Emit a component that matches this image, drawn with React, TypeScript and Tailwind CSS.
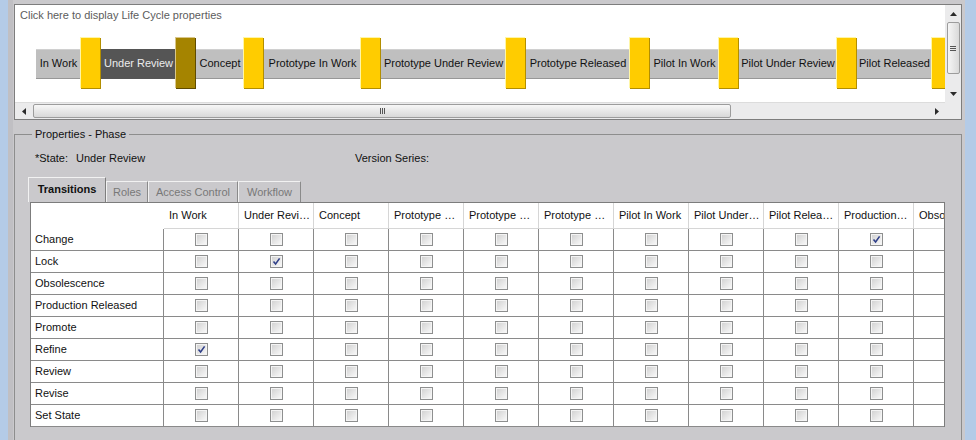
import React from 'react';

const phases = [
  { name: 'In Work', w: 'w-[45px]' },
  { name: 'Under Review', w: 'w-[75px]', current: true },
  { name: 'Concept', w: 'w-[48px]' },
  { name: 'Prototype In Work', w: 'w-[97px]' },
  { name: 'Prototype Under Review', w: 'w-[125px]' },
  { name: 'Prototype Released', w: 'w-[104px]' },
  { name: 'Pilot In Work', w: 'w-[69px]' },
  { name: 'Pilot Under Review', w: 'w-[98px]' },
  { name: 'Pilot Released', w: 'w-[75px]' },
];

const columns = [
  'In Work',
  'Under Revi…',
  'Concept',
  'Prototype …',
  'Prototype …',
  'Prototype …',
  'Pilot In Work',
  'Pilot Under…',
  'Pilot Relea…',
  'Production…',
  'Obso',
];

// row label -> checked column index
const rows: { name: string; checked?: number }[] = [
  { name: 'Change', checked: 9 },
  { name: 'Lock', checked: 1 },
  { name: 'Obsolescence' },
  { name: 'Production Released' },
  { name: 'Promote' },
  { name: 'Refine', checked: 0 },
  { name: 'Review' },
  { name: 'Revise' },
  { name: 'Set State' },
];

function Checkbox({ on }: { on?: boolean }) {
  return (
    <span className="flex h-[13px] w-[13px] border border-[#8e8f8f] bg-[#f4f4f4] p-px">
      <span className="flex h-full w-full items-center justify-center bg-gradient-to-br from-[#d3d3d3] to-[#f7f7f7]">
        {on && (
          <svg width="9" height="9" viewBox="0 0 9 9">
            <path d="M1.5 4.5 L3.6 7 L7.6 1.4" fill="none" stroke="#2f3f88" strokeWidth="1.6" />
          </svg>
        )}
      </span>
    </span>
  );
}

function Arrow({ dir }: { dir: 'up' | 'down' | 'left' | 'right' }) {
  const pts = {
    up: '0,4 3.5,0 7,4',
    down: '0,0 3.5,4 7,0',
    left: '4,0 0,3.5 4,7',
    right: '0,0 4,3.5 0,7',
  }[dir];
  const vertical = dir === 'up' || dir === 'down';
  return (
    <svg width={vertical ? 7 : 4} height={vertical ? 4 : 7} viewBox={vertical ? '0 0 7 4' : '0 0 4 7'}>
      <polygon points={pts} fill="#2b2b2b" />
    </svg>
  );
}

function Marker({ current }: { current?: boolean }) {
  return (
    <div
      className={
        current
          ? 'h-[51px] w-[20px] shrink-0 border-r border-b border-[#5f4b00] bg-[#a58400] shadow-[-1px_-1px_0_#d9c68a]'
          : 'h-[51px] w-[20px] shrink-0 border-r border-b border-[#b28e00] bg-[#ffcc00] shadow-[-1px_-1px_0_#fff6a6]'
      }
    />
  );
}

export default function App() {
  return (
    <div className="flex h-[440px] w-[976px] overflow-hidden bg-[#cac9cc] font-['Liberation_Sans',Arial,sans-serif] text-[11px] leading-[13px] text-[#111]">
      <div className="w-[8px] shrink-0 bg-[#b4cbe7]" />
      <div className="w-[5px] shrink-0 bg-[#c0bfc3]" />

      <main className="flex min-w-0 flex-1 flex-col pl-[1px] pr-[3px] pt-[4px]">
        {/* life cycle diagram */}
        <div className="grid h-[116px] shrink-0 grid-cols-[1fr_16px] grid-rows-[1fr_17px] border border-[#7d7d7d] bg-white">
          <div className="min-w-0 overflow-hidden">
            <div className="pl-[5px] pt-[4px] text-[#5c5c5c]">Click here to display Life Cycle properties</div>
            <div className="mt-[16px] flex w-max items-center pl-[21px]">
              {phases.map((p) => (
                <React.Fragment key={p.name}>
                  <div
                    className={
                      p.current
                        ? `flex h-[30px] shrink-0 items-center justify-center whitespace-nowrap bg-[#555555] text-[#ececec] ${p.w}`
                        : `flex h-[30px] shrink-0 items-center justify-center whitespace-nowrap border-t border-b border-t-[#d0d0d0] border-b-[#979797] bg-[#bfbfbf] ${p.w}`
                    }
                  >
                    {p.name}
                  </div>
                  <Marker current={p.current} />
                </React.Fragment>
              ))}
            </div>
          </div>

          <div className="flex flex-col items-center bg-[#ebebec]">
            <div className="flex h-[17px] items-center justify-center">
              <Arrow dir="up" />
            </div>
            <div className="flex h-[52px] w-[13px] items-center justify-center rounded-[2px] border border-[#9c9c9c] bg-gradient-to-r from-[#f6f6f6] to-[#d9d9d9]">
              <div className="flex flex-col gap-px">
                <span className="h-px w-[6px] bg-[#555]" />
                <span className="h-px w-[6px] bg-[#555]" />
                <span className="h-px w-[6px] bg-[#555]" />
              </div>
            </div>
            <div className="flex-1" />
            <div className="flex h-[17px] items-center justify-center">
              <Arrow dir="down" />
            </div>
          </div>

          <div className="flex min-w-0 items-center border-t border-[#dcdcdc] bg-[#ebebec]">
            <div className="flex w-[17px] shrink-0 items-center justify-center">
              <Arrow dir="left" />
            </div>
            <div className="ml-px flex h-[14px] w-[698px] shrink-0 items-center justify-center rounded-[2px] border border-[#9c9c9c] bg-gradient-to-b from-[#f7f7f7] to-[#d8d8d8]">
              <div className="flex gap-px">
                <span className="h-[6px] w-px bg-[#555]" />
                <span className="h-[6px] w-px bg-[#555]" />
                <span className="h-[6px] w-px bg-[#555]" />
              </div>
            </div>
            <div className="flex-1" />
            <div className="flex w-[17px] shrink-0 items-center justify-center">
              <Arrow dir="right" />
            </div>
          </div>
          <div className="bg-[#ebebec]" />
        </div>

        {/* properties group */}
        <fieldset className="mt-[8px] flex h-[330px] min-w-0 shrink-0 flex-col border border-[#8d8d8d]">
          <legend className="ml-[17px] px-[3px]">Properties - Phase</legend>

          <div className="flex pl-[20px] pt-[11px]">
            <span className="w-[41px]">*State:</span>
            <span className="w-[279px]">Under Review</span>
            <span>Version Series:</span>
          </div>

          <div className="mt-[12px] flex h-[25px] items-end pl-[13px]">
            <div className="flex h-[25px] w-[78px] items-center justify-center border-l border-t border-r border-l-[#f2f2f2] border-t-[#f2f2f2] border-r-[#7e7e7e] pb-[2px] font-bold">
              Transitions
            </div>
            <div className="flex h-[21px] w-[42px] items-center justify-center border-l border-t border-r border-l-[#f2f2f2] border-t-[#f2f2f2] border-r-[#8a8a8a] text-[#787878]">
              Roles
            </div>
            <div className="flex h-[21px] w-[90px] items-center justify-center border-l border-t border-r border-l-[#f2f2f2] border-t-[#f2f2f2] border-r-[#8a8a8a] text-[#787878]">
              Access Control
            </div>
            <div className="flex h-[21px] w-[63px] items-center justify-center border-l border-t border-r border-l-[#f2f2f2] border-t-[#f2f2f2] border-r-[#8a8a8a] text-[#787878]">
              Workflow
            </div>
          </div>

          <div className="ml-[15px] mr-[16px] min-w-0 flex-1 overflow-hidden border-l border-t border-r border-[#7c7c7c] bg-[#f3f1f3]">
            <div className="flex h-[26px] w-max bg-white">
              <div className="w-[133px] shrink-0" />
              {columns.map((c, i) => (
                <div
                  key={i}
                  className="flex w-[75px] shrink-0 items-center whitespace-nowrap border-r border-b border-[#d6d6d6] pl-[5px]"
                >
                  {c}
                </div>
              ))}
            </div>
            {rows.map((r) => (
              <div key={r.name} className="flex h-[22px] w-max border-b border-[#8a8a8a] bg-white">
                <div className="flex w-[133px] shrink-0 items-center border-r border-[#8a8a8a] pl-[4px]">{r.name}</div>
                {columns.map((_, i) => (
                  <div key={i} className="flex w-[75px] shrink-0 items-center justify-center border-r border-[#8a8a8a]">
                    {i < columns.length - 1 && <Checkbox on={r.checked === i} />}
                  </div>
                ))}
              </div>
            ))}
          </div>
        </fieldset>
      </main>

      <div className="w-[11px] shrink-0 bg-[#b4cbe7]" />
    </div>
  );
}
